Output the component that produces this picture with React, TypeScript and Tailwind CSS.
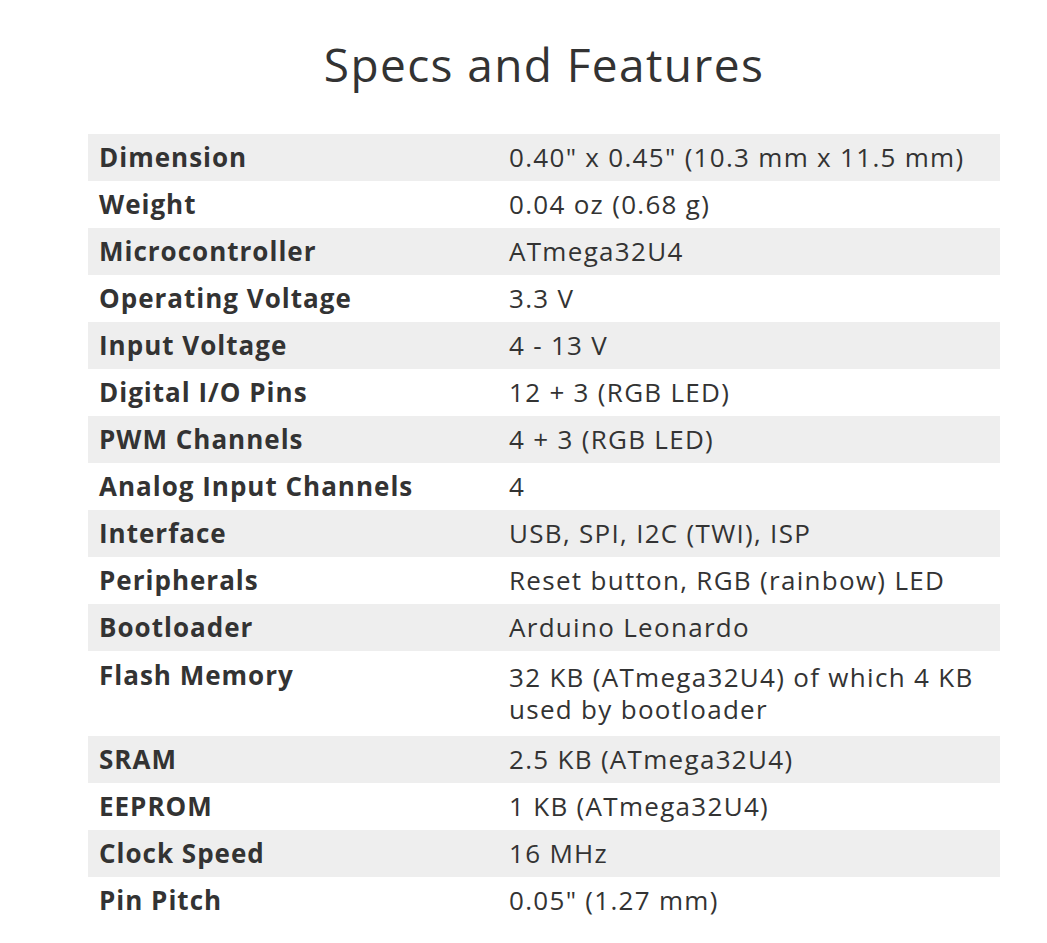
import React from "react";

const rows: [string, string | string[]][] = [
  ["Dimension", '0.40" x 0.45" (10.3 mm x 11.5 mm)'],
  ["Weight", "0.04 oz (0.68 g)"],
  ["Microcontroller", "ATmega32U4"],
  ["Operating Voltage", "3.3 V"],
  ["Input Voltage", "4 - 13 V"],
  ["Digital I/O Pins", "12 + 3 (RGB LED)"],
  ["PWM Channels", "4 + 3 (RGB LED)"],
  ["Analog Input Channels", "4"],
  ["Interface", "USB, SPI, I2C (TWI), ISP"],
  ["Peripherals", "Reset button, RGB (rainbow) LED"],
  ["Bootloader", "Arduino Leonardo"],
  ["Flash Memory", ["32 KB (ATmega32U4) of which 4 KB", "used by bootloader"]],
  ["SRAM", "2.5 KB (ATmega32U4)"],
  ["EEPROM", "1 KB (ATmega32U4)"],
  ["Clock Speed", "16 MHz"],
  ["Pin Pitch", '0.05" (1.27 mm)'],
];

export default function App() {
  return (
    <div className="min-h-[943px] bg-white text-[#333333] font-['Open_Sans',sans-serif]">
      <div className="ml-[88px] w-[912px] pt-[32px]">
        <h1 className="text-center text-[46px] leading-[64px] font-normal tracking-[1.4px]">
          Specs and Features
        </h1>
        <div className="mt-[38px]">
          {rows.map(([label, value], i) => {
            const multi = Array.isArray(value);
            return (
              <div
                key={label}
                className={`flex ${multi ? "h-[85px] items-start" : "h-[47px] items-center pb-[2px]"} ${
                  i % 2 === 0 ? "bg-[#eeeeee]" : "bg-white"
                }`}
              >
                <div
                  className={`w-[410px] shrink-0 pl-[11px] text-[26px] leading-[32px] font-bold tracking-[1px] ${
                    multi ? "pt-[8px]" : ""
                  }`}
                >
                  {label}
                </div>
                <div
                  className={`flex-1 pl-[11px] text-[26px] leading-[32px] font-normal tracking-[1.3px] ${
                    multi ? "pt-[10px]" : ""
                  }`}
                >
                  {multi ? (
                    <p>
                      {(value as string[])[0]}
                      <br />
                      {(value as string[])[1]}
                    </p>
                  ) : (
                    value
                  )}
                </div>
              </div>
            );
          })}
        </div>
      </div>
    </div>
  );
}
